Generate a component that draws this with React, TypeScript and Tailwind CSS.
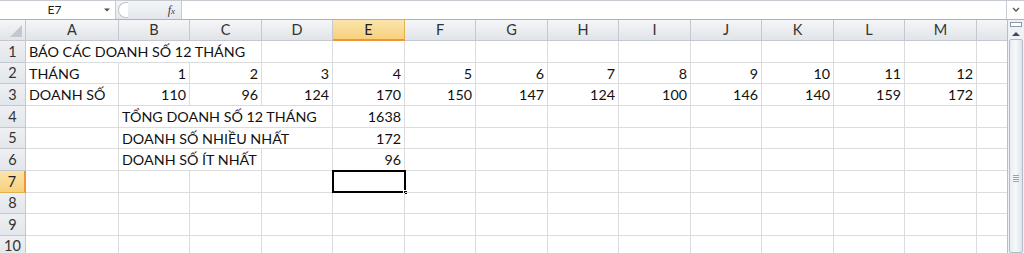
import React from "react";

const COLS = ["A", "B", "C", "D", "E", "F", "G", "H", "I", "J", "K", "L", "M"];
const WIDTHS = [93, 71, 72, 71, 72, 71, 72, 71, 72, 71, 72, 71, 72];
const ROWH = [22, 21, 22, 22, 21, 22, 22, 21, 22, 21];

type Seg = { from: number; to: number; text?: string; right?: boolean; sel?: boolean };

const months = [1, 2, 3, 4, 5, 6, 7, 8, 9, 10, 11, 12];
const sales = [110, 96, 124, 170, 150, 147, 124, 100, 146, 140, 159, 172];

function fill(segs: Seg[]): Seg[] {
  const out: Seg[] = [];
  let c = 0;
  const sorted = [...segs].sort((a, b) => a.from - b.from);
  for (const s of sorted) {
    while (c < s.from) {
      out.push({ from: c, to: c });
      c++;
    }
    out.push(s);
    c = s.to + 1;
  }
  while (c < 13) {
    out.push({ from: c, to: c });
    c++;
  }
  return out;
}

const ROWS: Seg[][] = [
  fill([{ from: 0, to: 2, text: "BÁO CÁC DOANH SỐ 12 THÁNG" }]),
  fill([
    { from: 0, to: 0, text: "THÁNG" },
    ...months.map((m, i) => ({ from: i + 1, to: i + 1, text: String(m), right: true })),
  ]),
  fill([
    { from: 0, to: 0, text: "DOANH SỐ" },
    ...sales.map((m, i) => ({ from: i + 1, to: i + 1, text: String(m), right: true })),
  ]),
  fill([
    { from: 1, to: 3, text: "TỔNG DOANH SỐ 12 THÁNG" },
    { from: 4, to: 4, text: "1638", right: true },
  ]),
  fill([
    { from: 1, to: 3, text: "DOANH SỐ NHIỀU NHẤT" },
    { from: 4, to: 4, text: "172", right: true },
  ]),
  fill([
    { from: 1, to: 2, text: "DOANH SỐ ÍT NHẤT" },
    { from: 4, to: 4, text: "96", right: true },
  ]),
  fill([{ from: 4, to: 4, sel: true }]),
  fill([]),
  fill([]),
  fill([]),
];

function segWidth(s: Seg) {
  let w = 0;
  for (let i = s.from; i <= s.to; i++) w += WIDTHS[i];
  return w;
}

export default function App() {
  return (
    <div
      className="w-[1024px] h-[253px] overflow-hidden bg-white text-black"
      style={{ fontFamily: "Lato, 'Liberation Sans', sans-serif" }}
    >
      {/* formula bar */}
      <div className="flex h-[20px] border-t border-[#c6cbd2] bg-white border-b border-b-[#a9b3c0]">
        <div className="flex w-[116px] items-center border-r border-[#c6cbd2]">
          <div className="flex-1 pl-[6px] text-center text-[12px] leading-none text-[#1e1e1e]">E7</div>
          <svg width="8" height="6" viewBox="0 0 8 6" className="mr-[4px]">
            <path d="M1 1.5 L4 4.5 L7 1.5 Z" fill="#4d4d4d" />
          </svg>
        </div>
        <div className="flex w-[66px] items-center bg-gradient-to-b from-[#f3f5f8] to-[#e3e7ed] border-r border-[#c6cbd2]">
          <div className="ml-[2px] h-[16px] w-[10px] rounded-l-full border border-r-0 border-[#c0c6ce] bg-white" />
          <div className="flex-1" />
          <span
            className="mr-[6px] text-[12px] italic leading-none text-[#3a3a3a]"
            style={{ fontFamily: "'Liberation Serif', serif" }}
          >
            f<span className="text-[9px]">x</span>
          </span>
        </div>
        <div className="flex-1 bg-white" />
        <div className="flex w-[18px] items-center justify-center border-l border-[#c6cbd2] bg-white">
          <svg width="8" height="6" viewBox="0 0 8 6">
            <path d="M1 1 L4 4 L7 1" stroke="#555" strokeWidth="1.3" fill="none" />
          </svg>
        </div>
      </div>

      <div className="flex">
        <div className="flex-1 overflow-hidden">
          {/* column headers */}
          <div className="flex h-[21px]">
            <div className="relative w-[26px] shrink-0 border-r border-b border-[#c5c9cf] bg-gradient-to-b from-[#f5f6f8] to-[#e1e4e8]">
              <svg width="12" height="12" viewBox="0 0 12 12" className="absolute right-[3px] bottom-[3px]">
                <path d="M12 0 L12 12 L0 12 Z" fill="#c3c8cf" />
              </svg>
            </div>
            {COLS.map((c, i) => (
              <div
                key={c}
                className={
                  i === 4
                    ? "flex shrink-0 items-center justify-center border-r border-[#e1b14d] border-b-2 border-b-[#f29436] bg-gradient-to-b from-[#fbe4ad] to-[#f7d17a] text-[14.5px] text-[#222]"
                    : "flex shrink-0 items-center justify-center border-r border-[#c5c9cf] border-b border-b-[#c5c9cf] bg-gradient-to-b from-[#f5f6f8] to-[#e1e4e8] text-[14.5px] text-[#333]"
                }
                style={{ width: WIDTHS[i] }}
              >
                {c}
              </div>
            ))}
            <div className="w-[40px] shrink-0 border-b border-[#c5c9cf] bg-gradient-to-b from-[#f5f6f8] to-[#e1e4e8]" />
          </div>

          {ROWS.map((row, r) => (
            <div key={r} className="flex" style={{ height: ROWH[r] }}>
              <div
                className={
                  r === 6
                    ? "flex w-[26px] shrink-0 items-center justify-center border-r-2 border-r-[#f29436] border-b border-[#e1b14d] bg-gradient-to-b from-[#fbe4ad] to-[#f7d17a] text-[14.5px] text-[#222]"
                    : "flex w-[26px] shrink-0 items-center justify-center border-r border-b border-[#c5c9cf] bg-gradient-to-b from-[#eef0f3] to-[#e3e6ea] text-[14.5px] text-[#333]"
                }
              >
                {r + 1}
              </div>
              {row.map((s, k) => (
                <div
                  key={k}
                  className={
                    "relative flex shrink-0 items-center whitespace-nowrap border-r border-b border-[#dadcdd] px-[3px] pt-[2px] text-[14.3px] leading-none text-[#111] " +
                    (s.right ? "justify-end" : "justify-start")
                  }
                  style={{ width: segWidth(s) }}
                >
                  {s.text}
                  {s.sel && (
                    <>
                      <div className="absolute left-[-1px] top-[-1px] right-[-2px] bottom-[-1px] border-2 border-black" />
                      <div className="absolute right-[-4px] bottom-[-3px] h-[5px] w-[5px] border border-white bg-black" />
                    </>
                  )}
                </div>
              ))}
              <div className="w-[40px] shrink-0 border-b border-[#dadcdd]" />
            </div>
          ))}
        </div>

        {/* vertical scrollbar */}
        <div className="flex h-[233px] w-[17px] shrink-0 flex-col border-l border-[#b7bec8] bg-[#eef1f5]">
          <div className="mx-[2px] mt-[2px] h-[5px] border border-[#8d98a6] bg-white" />
          <div className="flex h-[12px] items-center justify-center">
            <svg width="8" height="5" viewBox="0 0 8 5">
              <path d="M0 5 L4 1 L8 5 Z" fill="#3c4a5c" />
            </svg>
          </div>
          <div className="relative mx-[1px] flex-1 rounded-[2px] border border-[#b3bcc8] bg-gradient-to-r from-[#e9edf2] via-[#f6f8fa] to-[#dde3ea]">
            <div className="absolute left-[3px] right-[3px] top-[135px] flex flex-col gap-[1px]">
              <div className="h-[1px] bg-[#9aa4b1]" />
              <div className="h-[1px] bg-[#9aa4b1]" />
              <div className="h-[1px] bg-[#9aa4b1]" />
              <div className="h-[1px] bg-[#9aa4b1]" />
            </div>
          </div>
        </div>
      </div>
    </div>
  );
}
